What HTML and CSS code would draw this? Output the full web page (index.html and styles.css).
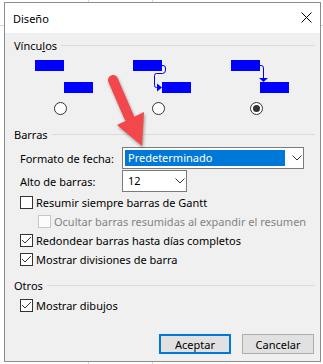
FILE: index.html
```html
<!DOCTYPE html>
<html lang="es">
<head>
    <meta charset="UTF-8">
    <title>Diseño</title>
    <link rel="stylesheet" href="styles.css">
</head>
<body>
    <div class="dialog">
        <div class="titlebar">
            <span class="title">Diseño</span>
            <svg class="close" width="11" height="11" viewBox="0 0 11 11">
                <path d="M0.5 0.5L10.5 10.5M10.5 0.5L0.5 10.5" stroke="#000" stroke-width="1"/>
            </svg>
        </div>
        <div class="dialog-body">
            <div class="legend"><span>Víncu<u>l</u>os</span></div>
            <div class="links">
                <div class="link">
                    <svg width="60" height="34" viewBox="0 0 60 34">
                        <rect x="1" y="1" width="29" height="11" fill="#0000ff"/>
                        <rect x="30" y="23" width="29" height="11" fill="#0000ff"/>
                    </svg>
                    <span class="radio"></span>
                </div>
                <div class="link">
                    <svg width="60" height="34" viewBox="0 0 60 34">
                        <rect x="1" y="1" width="29" height="11" fill="#0000ff"/>
                        <rect x="30" y="23" width="29" height="11" fill="#0000ff"/>
                        <path d="M30 6.5H31Q33.5 6.5 33.5 9V11Q33.5 14.5 30.5 14.5H24.5Q22.5 14.5 22.5 16.5V26.5Q22.5 28.5 24.5 28.5H26" fill="none" stroke="#0000ff" stroke-width="1"/>
                        <polygon points="25,24.5 30,28.5 25,32.5" fill="#0000ff"/>
                    </svg>
                    <span class="radio"></span>
                </div>
                <div class="link">
                    <svg width="60" height="34" viewBox="0 0 60 34">
                        <rect x="1" y="1" width="29" height="11" fill="#0000ff"/>
                        <rect x="30" y="23" width="29" height="11" fill="#0000ff"/>
                        <path d="M30 6.5H31Q33.5 6.5 33.5 9V20" fill="none" stroke="#0000ff" stroke-width="1"/>
                        <polygon points="29,19 38,19 33.5,23" fill="#0000ff"/>
                    </svg>
                    <span class="radio on"></span>
                </div>
            </div>

            <div class="legend bars"><span>Barras</span></div>
            <div class="field first">
                <span class="label">Formato de fecha:</span>
                <div class="combo wide">
                    <span class="value selected">Predeterminado</span>
                    <svg class="chev" width="10" height="6" viewBox="0 0 10 6"><polyline points="0.5,0.5 5,5 9.5,0.5" fill="none" stroke="#333" stroke-width="1"/></svg>
                </div>
            </div>
            <div class="field">
                <span class="label">Alto de barras:</span>
                <div class="combo small">
                    <span class="value">12</span>
                    <svg class="chev" width="10" height="6" viewBox="0 0 10 6"><polyline points="0.5,0.5 5,5 9.5,0.5" fill="none" stroke="#333" stroke-width="1"/></svg>
                </div>
            </div>

            <div class="check first">
                <span class="box"></span>
                <span>Resumir siempre barras de Gantt</span>
            </div>
            <div class="check sub disabled">
                <span class="box"></span>
                <span>Ocultar barras resumidas al expandir el resumen</span>
            </div>
            <div class="check">
                <span class="box"><svg width="11" height="11" viewBox="0 0 11 11"><polyline points="1,5 4,8 10,2" fill="none" stroke="#333" stroke-width="1"/></svg></span>
                <span>Redondear barras hasta días completos</span>
            </div>
            <div class="check">
                <span class="box"><svg width="11" height="11" viewBox="0 0 11 11"><polyline points="1,5 4,8 10,2" fill="none" stroke="#333" stroke-width="1"/></svg></span>
                <span>Mostrar divisiones de barra</span>
            </div>

            <div class="legend others"><span>Otros</span></div>
            <div class="check drawings">
                <span class="box"><svg width="11" height="11" viewBox="0 0 11 11"><polyline points="1,5 4,8 10,2" fill="none" stroke="#333" stroke-width="1"/></svg></span>
                <span>Mostrar dibujos</span>
            </div>

            <div class="actions">
                <button class="btn default">Aceptar</button>
                <button class="btn">Cancelar</button>
            </div>
        </div>
    </div>

    <!-- annotation arrow drawn over the dialog -->
    <svg class="arrow" width="60" height="85" viewBox="0 0 60 85">
        <line x1="13" y1="10" x2="29" y2="47" stroke="#f2474b" stroke-width="10" stroke-linecap="round"/>
        <polygon points="17,55 44,42 42,76" fill="#f2474b"/>
    </svg>
</body>
</html>
```

FILE: styles.css
```css
* {
    box-sizing: border-box;
}

body {
    margin: 0;
    height: 364px;
    overflow: hidden;
    position: relative;
    font-family: "Noto Sans", "Segoe UI", sans-serif;
    font-size: 11px;
    color: #000;
    /* spreadsheet grid behind the dialog */
    background:
        linear-gradient(#d4d4d4, #d4d4d4) 88px 0 / 1px 100% no-repeat,
        linear-gradient(#d4d4d4, #d4d4d4) 152px 0 / 1px 100% no-repeat,
        linear-gradient(#d4d4d4, #d4d4d4) 0 25px / 100% 1px no-repeat,
        #fff;
}

.dialog {
    margin: 2px 0 0 4px;
    width: 317px;
    height: 360px;
    border: 1px solid #8c8c8c;
    background: #f0f0f0;
}

.titlebar {
    height: 30px;
    background: #fff;
    display: flex;
    align-items: center;
    justify-content: space-between;
    padding: 0 8px 0 8px;
}

.title {
    font-size: 11px;
}

.close {
    display: block;
    margin-top: -2px;
}

.dialog-body {
    padding: 0 5px 0 9px;
}

.legend {
    display: flex;
    align-items: center;
    gap: 4px;
    height: 16px;
    margin-top: 4px;
}

.legend::after {
    content: "";
    flex: 1;
    height: 1px;
    background: #dadada;
}

.legend.bars {
    margin-top: 11px;
}

.legend.others {
    margin-top: 8px;
}

.links {
    display: grid;
    grid-template-columns: repeat(3, 98px);
    margin: 6px 0 0 -3px;
}

.link {
    display: flex;
    flex-direction: column;
    align-items: center;
}

.link svg {
    display: block;
    margin-left: 8px;
}

.radio {
    margin-top: 9px;
    width: 13px;
    height: 13px;
    border: 1px solid #333;
    border-radius: 50%;
    background: #fff;
    display: flex;
    align-items: center;
    justify-content: center;
}

.radio.on::after {
    content: "";
    width: 7px;
    height: 7px;
    border-radius: 50%;
    background: #333;
}

.field {
    display: flex;
    align-items: center;
    padding-left: 6px;
    margin-top: 1px;
}

.field.first {
    margin-top: 5px;
}

.label {
    width: 102px;
}

.combo {
    height: 22px;
    border: 1px solid #7a7a7a;
    background: #fff;
    display: flex;
    align-items: center;
    padding: 2px 1px 2px 2px;
}

.combo.wide {
    width: 182px;
}

.combo.small {
    width: 65px;
}

.value {
    height: 16px;
    line-height: 16px;
    padding-left: 3px;
    width: 46px;
}

.value.selected {
    width: 160px;
    background: #0078d7;
    color: #fff;
}

.chev {
    display: block;
    margin-left: auto;
}

.check {
    display: flex;
    align-items: center;
    gap: 3px;
    height: 19px;
    padding-left: 6px;
}

.check.first {
    margin-top: 1px;
}

.check.sub {
    padding-left: 24px;
}

.check.drawings {
    margin-top: 3px;
}

.box {
    width: 13px;
    height: 13px;
    border: 1px solid #333;
    background: #fff;
    display: flex;
    align-items: center;
    justify-content: center;
}

.box svg {
    display: block;
}

.check.disabled {
    color: #838383;
}

.check.disabled .box {
    border-color: #c6c6c6;
    background: #fcfcfc;
}

.actions {
    display: flex;
    justify-content: flex-end;
    gap: 11px;
    margin-top: 19px;
    padding-right: 1px;
}

.btn {
    width: 72px;
    height: 20px;
    border: 1px solid #adadad;
    background: #e1e1e1;
    font-family: inherit;
    font-size: 11px;
    color: #000;
    padding: 0;
}

.btn.default {
    border: 2px solid #0078d7;
}

.arrow {
    position: absolute;
    left: 100px;
    top: 70px;
    filter: drop-shadow(1px 2px 1.5px rgba(0, 0, 0, 0.35));
}
```
